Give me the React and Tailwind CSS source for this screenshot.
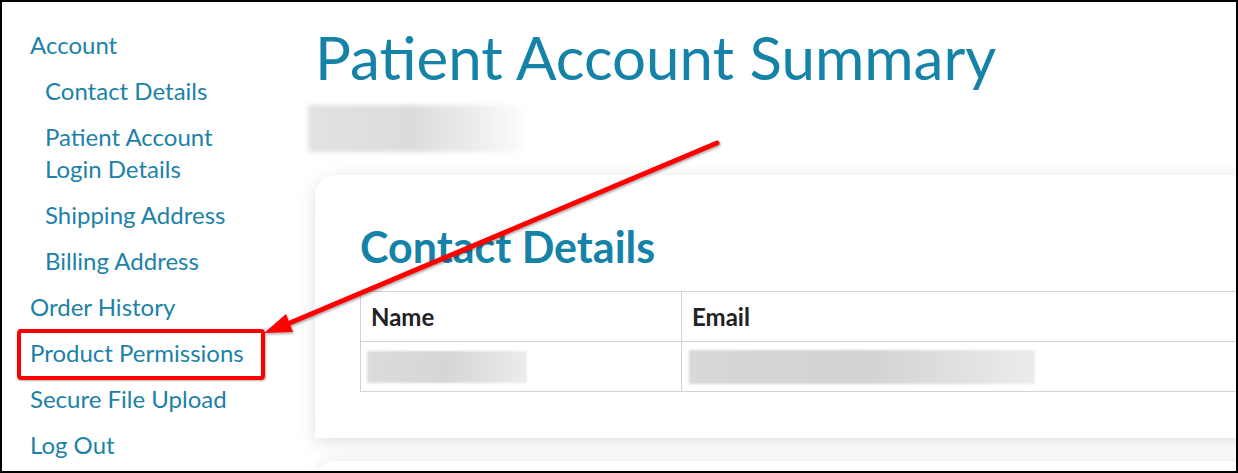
export default function App() {
  const font = { fontFamily: 'Lato, "Open Sans", "Liberation Sans", sans-serif' };
  const top = "text-[24px] leading-[32px] text-[#1c82a8]";
  return (
    <div className="relative w-[1238px] h-[473px] border-2 border-black overflow-hidden bg-white flex" style={font}>
      <nav className="w-[306px] shrink-0 pl-[28px] pt-[27px] flex flex-col gap-[14px]">
        <a className={top}>Account</a>
        <div className="flex flex-col gap-[14px] pl-[15px]">
          <a className={top}>Contact Details</a>
          <a className={top}>Patient Account<br />Login Details</a>
          <a className={top}>Shipping Address</a>
          <a className={top}>Billing Address</a>
        </div>
        <a className={top}>Order History</a>
        <a className={top}>Product Permissions</a>
        <a className={top}>Secure File Upload</a>
        <a className={top}>Log Out</a>
      </nav>
      <main className="flex-1 flex flex-col pt-[17px] min-w-0">
        <h1 className="shrink-0 text-[60px] leading-[77px] text-[#1582a8] ml-[7px]">Patient Account Summary</h1>
        <div className="shrink-0 mt-[9px] w-[212px] h-[47px] bg-gradient-to-r from-[#e2e2e2] via-[#dcdcdc] to-[#fafafa] blur-[2px]"></div>
        <div className="shrink-0 mt-[23px] ml-[7px] -mr-[40px] bg-white rounded-tl-[20px] rounded-tr-[20px] shadow-[0_4px_18px_rgba(0,0,0,0.13)] pl-[45px] pt-[47px] pb-[46px]">
          <h2 className="text-[43px] leading-[50px] font-bold text-[#1582a8]">Contact Details</h2>
          <table className="mt-[19px] w-full border-collapse">
            <tbody>
              <tr className="h-[50px]">
                <th className="w-[321px] border border-[#d3d3d3] text-left pl-[10px] text-[24px] font-bold text-[#222]">Name</th>
                <th className="border border-[#d3d3d3] border-r-0 text-left pl-[10px] text-[24px] font-bold text-[#222]">Email</th>
              </tr>
              <tr className="h-[50px]">
                <td className="border border-[#d3d3d3] pl-[6px]">
                  <div className="w-[160px] h-[32px] bg-gradient-to-r from-[#dcdcdc] via-[#d6d6d6] to-[#ececec] blur-[1px]"></div>
                </td>
                <td className="border border-[#d3d3d3] border-r-0 pl-[7px]">
                  <div className="w-[346px] h-[34px] bg-gradient-to-r from-[#d8d8d8] via-[#d2d2d2] to-[#ececec] blur-[1px]"></div>
                </td>
              </tr>
            </tbody>
          </table>
        </div>
        <div className="shrink-0 mt-[23px] ml-[7px] -mr-[40px] h-[40px] bg-white rounded-tl-[20px] shadow-[0_-2px_14px_rgba(0,0,0,0.08)]"></div>
      </main>
      <div className="absolute left-[15px] top-[327px] w-[248px] h-[51px] border-[4px] border-[#ff0000] rounded-[4px] shadow-[1px_1px_2px_rgba(0,0,0,0.3)] pointer-events-none"></div>
      <svg className="absolute left-0 top-0 pointer-events-none" width="1238" height="473" viewBox="0 0 1238 473">
        <defs>
          <filter id="sh" x="-10%" y="-10%" width="120%" height="120%">
            <feDropShadow dx="1" dy="1.5" stdDeviation="0.8" floodColor="#000" floodOpacity="0.35" />
          </filter>
        </defs>
        <g filter="url(#sh)">
          <line x1="715" y1="141" x2="283" y2="323" stroke="#ff0000" strokeWidth="5" strokeLinecap="round" />
          <polygon points="262,331 284,312 291,330" fill="#ff0000" />
        </g>
      </svg>
    </div>
  );
}
